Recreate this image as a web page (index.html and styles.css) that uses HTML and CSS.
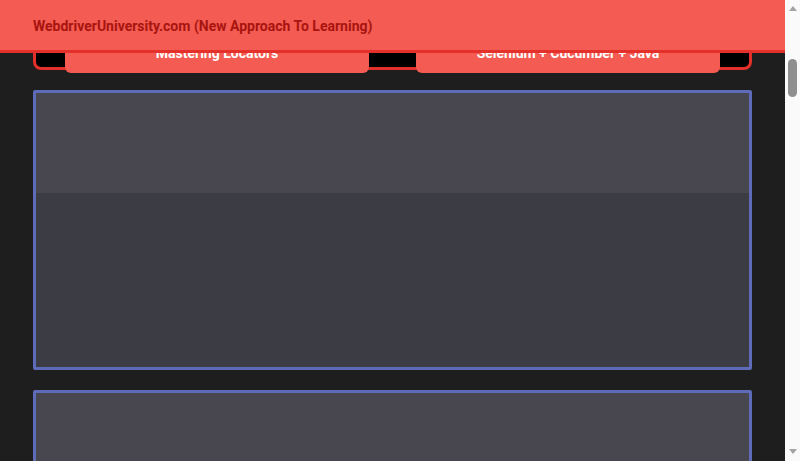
FILE: index.html
```html
<!DOCTYPE html>
<html lang="en">
<head>
<meta charset="utf-8">
<title>WebdriverUniversity.com</title>
<link rel="stylesheet" href="styles.css">
</head>
<body>
<div class="frame">
  <div class="viewport" id="scroller">
    <header class="topbar">
      <span class="brand">WebdriverUniversity.com (New Approach To Learning)</span>
    </header>
    <main class="page">
      <section class="hero"></section>
      <section class="courses">
        <div class="course-row">
          <a class="course-btn">Mastering Locators</a>
          <a class="course-btn">Selenium + Cucumber + Java</a>
        </div>
      </section>
      <section class="cards">
        <div class="card"><div class="card-head"></div><div class="card-body"></div></div>
        <div class="card"><div class="card-head"></div><div class="card-body"></div></div>
        <div class="card"><div class="card-head"></div><div class="card-body"></div></div>
        <div class="card"><div class="card-head"></div><div class="card-body"></div></div>
        <div class="card"><div class="card-head"></div><div class="card-body"></div></div>
        <div class="card"><div class="card-head"></div><div class="card-body"></div></div>
        <div class="card"><div class="card-head"></div><div class="card-body"></div></div>
        <div class="card"><div class="card-head"></div><div class="card-body"></div></div>
        <div class="card"><div class="card-head"></div><div class="card-body"></div></div>
        <div class="card"><div class="card-head"></div><div class="card-body"></div></div>
        <div class="card"><div class="card-head"></div><div class="card-body"></div></div>
        <div class="card"><div class="card-head"></div><div class="card-body"></div></div>
        <div class="card"><div class="card-head"></div><div class="card-body"></div></div>
        <div class="card"><div class="card-head"></div><div class="card-body"></div></div>
        <div class="card"><div class="card-head"></div><div class="card-body"></div></div>
      </section>
    </main>
  </div>
  <div class="scrollbar" aria-hidden="true">
    <span class="sb-arrow sb-up"></span>
    <div class="sb-track"><span class="sb-thumb"></span></div>
    <span class="sb-arrow sb-down"></span>
  </div>
</div>
<script src="script.js"></script>
</body>
</html>
```
FILE: styles.css
```css
html, body {
  margin: 0;
  padding: 0;
  height: 100%;
  overflow: hidden;
}
body {
  background: #1e1e1e;
  font-family: Roboto, "Liberation Sans", Arial, sans-serif;
}
.frame {
  display: flex;
  height: 100%;
}
.viewport {
  flex: 1;
  height: 100%;
  overflow-y: scroll;
  scrollbar-width: none;
  background: #1e1e1e;
}
.viewport::-webkit-scrollbar {
  display: none;
}
.topbar {
  position: sticky;
  top: 0;
  height: 50px;
  margin-bottom: -53px;
  background: #f45b52;
  border-bottom: 3px solid #e3302a;
  display: flex;
  align-items: center;
  padding: 0 33px;
  z-index: 10;
}
.brand {
  color: #a8140f;
  font-weight: 700;
  font-size: 14px;
  padding-top: 1px;
}
.page {
  display: flex;
  flex-direction: column;
  padding: 0 33px 20px;
}
.hero {
  height: 470px;
}
.courses {
  background: #000;
  border: 3px solid #e3302a;
  border-top-width: 2px;
  border-radius: 8px;
  height: 115px;
  display: flex;
  align-items: flex-end;
  padding: 0 29px;
}
.course-row {
  display: flex;
  gap: 47px;
  width: 100%;
  margin-bottom: -6px;
}
.course-btn {
  flex: 1;
  background: #f45b52;
  color: #fff;
  font-weight: 700;
  font-size: 14px;
  line-height: 20px;
  text-align: center;
  padding: 12px 0 10px;
  border-radius: 6px;
}
.cards {
  display: flex;
  flex-direction: column;
  gap: 20px;
  margin-top: 20px;
}
.card {
  height: 280px;
  box-sizing: border-box;
  border: 3px solid #5d6bb8;
  border-radius: 2px;
  display: flex;
  flex-direction: column;
}
.card-head {
  height: 100px;
  background: #484750;
}
.card-body {
  flex: 1;
  background: #3c3c45;
}

/* drawn scrollbar */
.scrollbar {
  width: 15px;
  flex: none;
  background: #fafafa;
  display: flex;
  flex-direction: column;
  align-items: center;
}
.sb-arrow {
  width: 0;
  height: 0;
  border-left: 4.5px solid transparent;
  border-right: 4.5px solid transparent;
}
.sb-up {
  margin-top: 6px;
  border-bottom: 5px solid #a3a3a3;
}
.sb-down {
  margin-bottom: 7px;
  border-top: 5px solid #a3a3a3;
}
.sb-track {
  flex: 1;
  width: 100%;
  display: flex;
  justify-content: center;
  align-items: flex-start;
}
.sb-thumb {
  width: 9px;
  height: 38px;
  margin-top: 48px;
  border-radius: 5px;
  background: #8f8f8f;
}
```
FILE: script.js
```js
document.getElementById('scroller').scrollTop = 520;
```
